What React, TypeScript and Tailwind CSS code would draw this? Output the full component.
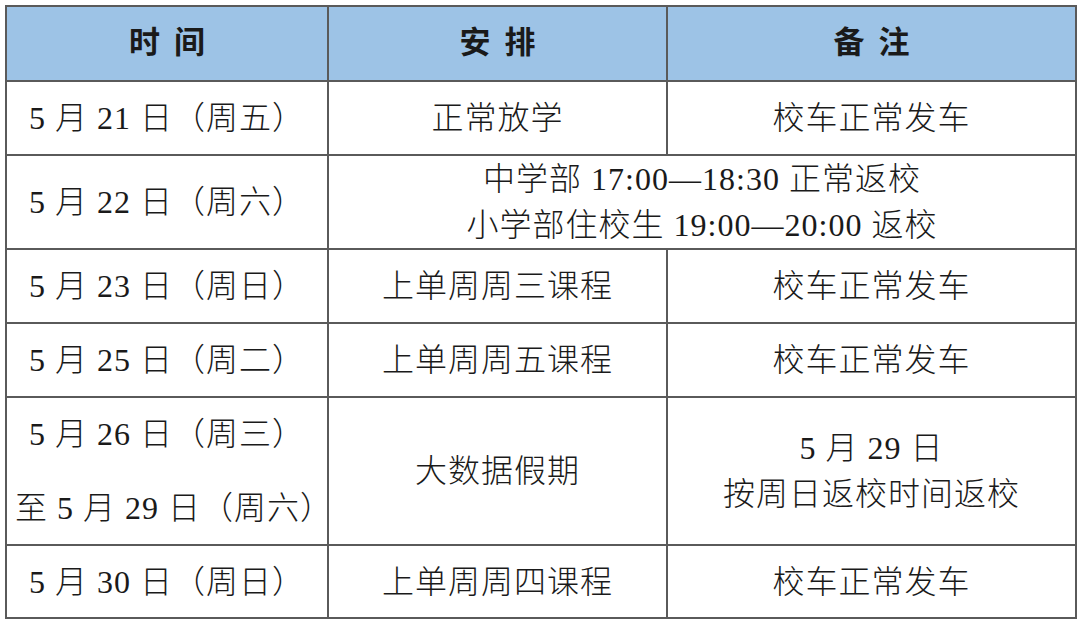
import React from "react";

const font = { fontFamily: '"Liberation Serif", "Noto Sans CJK SC", serif' };

function Cell({ children, className = "" }: { children: React.ReactNode; className?: string }) {
  return (
    <div className={`bg-white flex flex-col items-center justify-center text-center text-[32px] leading-[46px] tracking-[1px] text-[#1a1a1a] font-light ${className}`}>
      {children}
    </div>
  );
}

function Head({ children }: { children: React.ReactNode }) {
  return (
    <div className="bg-[#9dc3e6] flex items-center justify-center text-[31px] font-bold text-[#1a1a1a] tracking-[14px] pl-[14px]">
      {children}
    </div>
  );
}

export default function App() {
  return (
    <div className="w-[1080px] h-[623px] bg-white pt-[5px] pl-[5px]" style={font}>
      <div className="grid grid-cols-[320px_337px_407px] grid-rows-[73px_72px_92px_72px_72px_146px_71px] gap-[2px] p-[2px] bg-[#5a5a5a] w-[1072px]">
        <Head>时间</Head>
        <Head>安排</Head>
        <Head>备注</Head>

        <Cell>5 月 21 日（周五）</Cell>
        <Cell>正常放学</Cell>
        <Cell>校车正常发车</Cell>

        <Cell>5 月 22 日（周六）</Cell>
        <Cell className="col-span-2">
          <div>中学部 17:00—18:30 正常返校</div>
          <div>小学部住校生 19:00—20:00 返校</div>
        </Cell>

        <Cell>5 月 23 日（周日）</Cell>
        <Cell>上单周周三课程</Cell>
        <Cell>校车正常发车</Cell>

        <Cell>5 月 25 日（周二）</Cell>
        <Cell>上单周周五课程</Cell>
        <Cell>校车正常发车</Cell>

        <Cell className="gap-[28px]">
          <div>5 月 26 日（周三）</div>
          <div className="whitespace-nowrap pl-[14px]">至 5 月 29 日（周六）</div>
        </Cell>
        <Cell>大数据假期</Cell>
        <Cell>
          <div>5 月 29 日</div>
          <div>按周日返校时间返校</div>
        </Cell>

        <Cell>5 月 30 日（周日）</Cell>
        <Cell>上单周周四课程</Cell>
        <Cell>校车正常发车</Cell>
      </div>
    </div>
  );
}
